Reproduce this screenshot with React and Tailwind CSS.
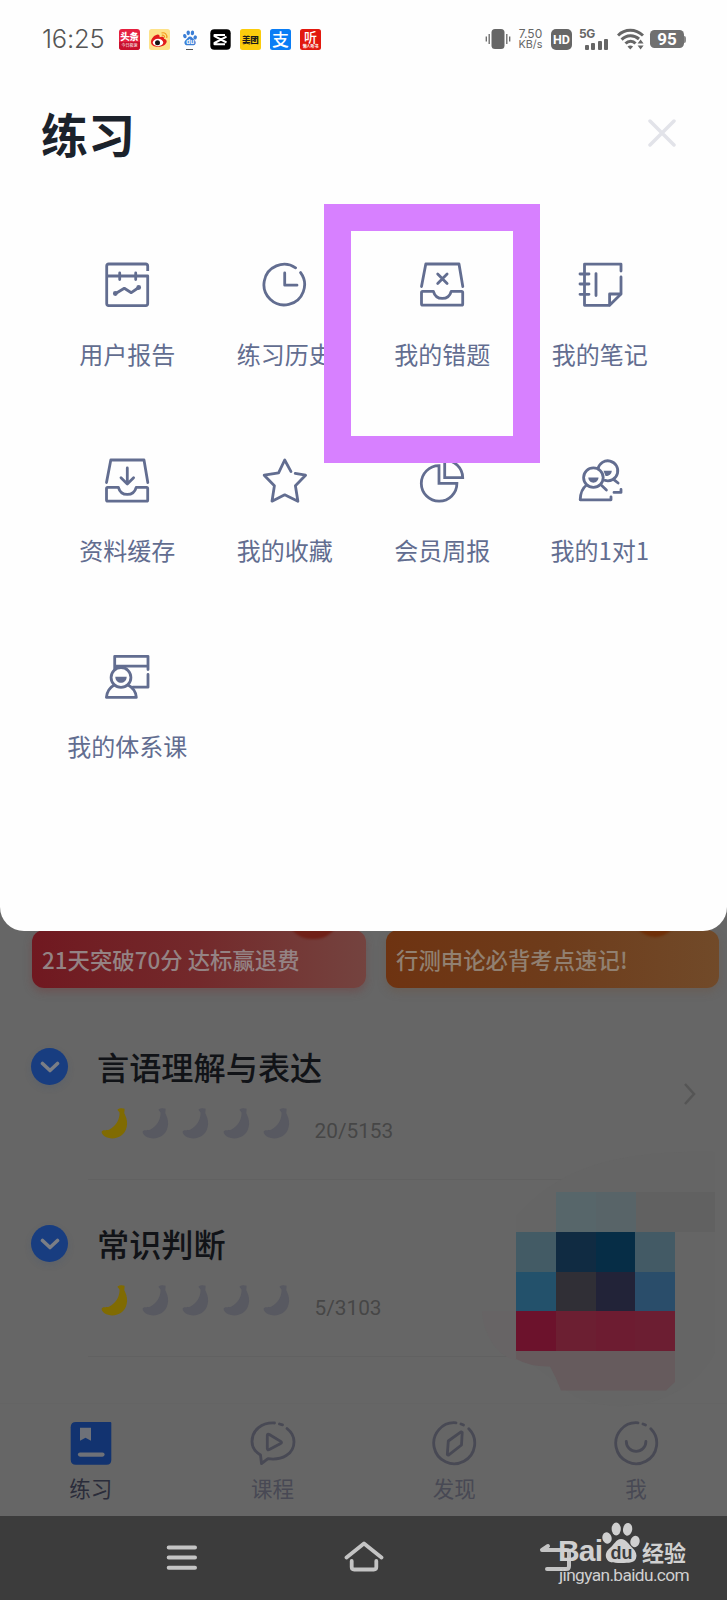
import React from 'react';

const stroke = {
    fill: 'none',
    stroke: 'currentColor',
    strokeWidth: 2.8,
    strokeLinecap: 'round',
    strokeLinejoin: 'round',
};

function Icon({ children }) {
    return (
        <svg viewBox="0 0 48 48" className="w-12 h-12" {...stroke}>
            {children}
        </svg>
    );
}

const Tray = () => (
    <>
        <path d="M3.5 25.5 7.8 3H41l3.8 22.5" />
        <path d="M4.6 30.3H15.4C16.6 34.8 19.8 37.4 24.3 37.4S32 34.8 33.2 30.3H43.6q1.1 0 1.1 1.1V43q0 1.2-1.1 1.2H4.7q-1.2 0-1.2-1.2V31.4q0-1.1 1.1-1.1Z" />
    </>
);

const ITEMS = [
    {
        label: '用户报告',
        icon: (
            <Icon>
                <path d="M44.7 10V5q0-2-2-2H5.7q-2 0-2 2v37.6q0 2 2 2h37q2 0 2-2V15H4" strokeLinecap="butt" />
                <path d="M16.7 12v6.6M32.7 12v6.6M12.3 32.7l9-5.4 7 4.4 7.4-5.2" />
                <circle cx="12.3" cy="32.5" r="1.5" fill="currentColor" strokeWidth="1.8" />
                <circle cx="35.7" cy="26.5" r="1.5" fill="currentColor" strokeWidth="1.8" />
            </Icon>
        ),
    },
    {
        label: '练习历史',
        icon: (
            <Icon>
                <path d="M34.6 6.8A20.3 20.3 0 1 0 39.6 11.6" />
                <path d="M23.7 12v12.2H36" />
            </Icon>
        ),
    },
    {
        label: '我的错题',
        icon: (
            <Icon>
                <Tray />
                <path d="m19.7 13 9.4 9.4M29.1 13l-9.4 9.4" />
            </Icon>
        ),
    },
    {
        label: '我的笔记',
        icon: (
            <Icon>
                <path d="M45 10V3.2H8.500V44.3H33.600L45 33V16" />
                <path d="M33.6 44V33H44.800M20 12.6v22" />
                <path d="M4 13h9M4 23h9M4 33.3h9" />
            </Icon>
        ),
    },
    {
        label: '资料缓存',
        icon: (
            <Icon>
                <Tray />
                <path d="M24.3 11v15.6M18 20.8l6.3 6.2 6.3-6.2" />
            </Icon>
        ),
    },
    {
        label: '我的收藏',
        icon: (
            <Icon>
                <path d="M30 14.6 23.7 3 17.6 15.8 3.2 18.2 13.4 28.7 11 44.2 23.7 37.8 36.9 44.2 34.4 28.7 44.6 18.2 34.2 16.4" />
            </Icon>
        ),
    },
    {
        label: '会员周报',
        icon: (
            <Icon>
                <path d="M21 8.6V26.3H38.9A17.8 17.8 0 1 1 21 8.6Z" strokeLinejoin="miter" />
                <path d="M26.7 3.2V20.6H44.7A18 17.6 0 0 0 26.7 3.2Z" strokeLinejoin="miter" />
            </Icon>
        ),
    },
    {
        label: '我的1对1',
        icon: (
            <Icon>
                <path d="M22 11.8A10 10 0 1 1 29 23.4M37.5 22.3l4.6 3.7M38 35.4h7v-3" />
                <circle cx="17.4" cy="20.6" r="9.8" />
                <path d="M10.6 28C6.6 31 4.4 35.7 4.2 42.8H35v-3M25.7 28.6 30.4 33" />
                <path d="M12.3 20.6h10.200c-.3 6.800-9.900 6.800-10.200 0ZM27.500 13.800h8.300c-.3 4-3.400 5.400-6.200 5.200Z" fill="currentColor" stroke="none" />
            </Icon>
        ),
    },
    {
        label: '我的体系课',
        icon: (
            <Icon>
                <path d="M11.7 16V3.3H45V16.6M12 13.2H45M45 21.4V34.2H30" />
                <circle cx="18" cy="24.4" r="9.9" />
                <path d="M11.3 32C6.4 34.6 4 39 3.4 44.4H33.3C33 39.2 30.4 34.8 25 32" />
                <path d="M12.3 23.800h11.4c-.2 8-11.2 8-11.4 0Z" fill="currentColor" stroke="none" />
            </Icon>
        ),
    },
];

function Paw({ className, toes, pad }) {
    return (
        <svg viewBox="0 0 38 42" className={className}>
            <g fill={toes}>
                <ellipse cx="5" cy="16" rx="4.600" ry="5.800" transform="rotate(-15 5 16)" />
                <ellipse cx="14.2" cy="7" rx="4.600" ry="6.400" />
                <ellipse cx="25.6" cy="7.3" rx="4.600" ry="6.400" transform="rotate(8 25.6 7.3)" />
                <ellipse cx="33" cy="19.5" rx="4.600" ry="5.800" transform="rotate(15 33 19.5)" />
                <path d="M19 17c-5 0-7 6-11 9-4 3.300-5 7-3.500 10.500 1.600 4 6 4.500 14.500 4.500s13.500-.5 15-4.500c1.300-3.500 0-7.200-3.500-10.500-4-3.500-6-9-11.500-9Z" />
            </g>
            <text x="19.5" y="37" textAnchor="middle" fontFamily="Liberation Sans" fontWeight="700" fontSize="18" fill={pad}>
                du
            </text>
        </svg>
    );
}

function StatusBar() {
    return (
        <div className="h-[78px] pl-[42px] pr-[41px] flex items-center justify-between text-[#666]">
            <div className="flex items-center">
                <span className="w-[77px] text-[25.5px] leading-none tracking-[-0.2px] font-[Inter,sans-serif] font-light text-[#555]">16:25</span>
                <div className="flex items-center gap-[9.2px]">
                    <div className="w-[21px] h-[21px] shrink-0 rounded-[3px] bg-[#e5203f] text-white flex flex-col items-center overflow-hidden">
                        <span className="text-[9.5px] leading-[12px] mt-[1px] font-black tracking-[-0.3px]">头条</span>
                        <span className="w-full h-[8px] bg-[#c9102c] text-[4px] leading-[7px] text-center whitespace-nowrap">今日极速</span>
                    </div>
                    <svg viewBox="0 0 21 21" className="w-[21px] h-[21px]">
                        <rect width="21" height="21" rx="2.5" fill="#fde28a" />
                        <path d="M2 13c0-4 5-8 7.500-7.300 1.500.4 1.200 2 1 2.500 2-.8 5-.8 4.500 1.600 4 1.200 3 4.200.5 6.200C12 18.500 2 19 2 13Z" fill="#e21c1c" />
                        <ellipse cx="9" cy="13.500" rx="5.200" ry="3.700" fill="#fff" />
                        <circle cx="8.500" cy="13.700" r="2.500" fill="#111" />
                        <path d="M12.500 4c3.500-1 6 1.500 5.200 5M12.800 6.300c1.800-.4 3 .6 2.700 2.300" fill="none" stroke="#f39a1e" strokeWidth="1.200" />
                    </svg>
                    <div className="w-[21px] h-[21px] flex flex-col items-center justify-between">
                        <Paw className="w-[14px] h-[16px] mt-[1px]" toes="#3c7fd6" pad="#fff" />
                        <span className="w-[7px] h-px bg-[#555]" />
                    </div>
                    <svg viewBox="0 0 21 21" className="w-[21px] h-[21px]">
                        <rect x=".3" y=".3" width="20.400" height="20.400" rx="4" fill="#000" />
                        <path d="M15 6H4.500V7.200L16.500 13.500M15 15.300H4.500V14L16.500 7.700" fill="none" stroke="#fff" strokeWidth="2" strokeLinejoin="round" />
                    </svg>
                    <div className="w-[21px] h-[21px] rounded-[2.5px] bg-[#fbcc0c] text-[#1a1a1a] text-[8.5px] leading-[20px] text-center font-black tracking-[-0.3px]">美团</div>
                    <div className="w-[21px] h-[21px] rounded-[2.5px] bg-[#0a7df5] text-white text-[17px] leading-[20px] text-center font-medium">支</div>
                    <div className="w-[21px] h-[21px] rounded-[2.5px] bg-[#e2190f] text-white flex flex-col items-center">
                        <span className="text-[13px] leading-[15px] font-medium">听</span>
                        <span className="text-[4px] leading-[5px] font-bold whitespace-nowrap">懒人听书</span>
                    </div>
                </div>
            </div>

            <div className="flex items-center">
                <svg viewBox="0 0 26 22" className="w-[26px] h-[22px]" fill="#666">
                    <rect x="6.500" y="1" width="13" height="20" rx="3.500" />
                    <path d="M4.200 6v10M1.300 8.500v5M21.800 6v10M24.700 8.500v5" stroke="#666" strokeWidth="1.300" />
                </svg>
                <div className="w-[25px] ml-[7px] mr-[8px] text-[12px] leading-[11.500px] flex flex-col items-center font-[Inter,sans-serif]">
                    <span>7.50</span>
                    <span className="text-[10.8px]">KB/s</span>
                </div>
                <div className="w-[21px] h-[21px] rounded-[5px] bg-[#666] text-white text-[12.5px] leading-[21px] font-bold text-center font-[Roboto,sans-serif]">HD</div>
                <div className="w-[31px] h-[21px] ml-[7px] flex flex-col justify-between">
                    <span className="h-[9px] text-[12px] leading-[10px] font-bold font-[Inter,sans-serif] tracking-[-0.3px]">5G</span>
                    <div className="h-[11px] flex items-end gap-[2.300px] pl-[6px]">
                        <span className="w-[4px] h-[5px] bg-[#666] rounded-[1px]" />
                        <span className="w-[4px] h-[7px] bg-[#666] rounded-[1px]" />
                        <span className="w-[4px] h-[9px] bg-[#666] rounded-[1px]" />
                        <span className="w-[4px] h-[11px] bg-[#666] rounded-[1px]" />
                    </div>
                </div>
                <svg viewBox="0 0 28 22" className="w-[28px] h-[22px] ml-[7px]" fill="none" stroke="#666" strokeWidth="3">
                    <path d="M1 7.500C8 .6 18.500.6 26 7.500M4.600 11.600C9.500 6.600 17 6.600 22 11M8.500 15.500c3-3 7.500-3 10 0" />
                    <path d="M13.300 21.500 10.500 18.500q2.800-2 5.600 0ZM23.600 11.500l3 4h-6ZM23.600 21.500l3-4h-6Z" fill="#666" stroke="none" />
                </svg>
                <div className="flex items-center ml-[5px]">
                    <div className="w-[34px] h-[18px] rounded-[4.500px] bg-[#707070] text-white text-[17px] leading-[19px] font-bold text-center font-[Roboto,sans-serif]">95</div>
                    <span className="w-[2px] h-[7px] bg-[#8a8a8a] rounded-r-[2px]" />
                </div>
            </div>
        </div>
    );
}

function Banana({ on }) {
    return (
        <svg viewBox="0 0 27 31" className="w-[27px] h-[31px]">
            <path
                d="M16.500 1.500c2-1.500 5-1.800 7-.7.400 1.800-.4 3-.2 4.500C28 14 26.500 22 21 27 15 31.800 5 31.500 1.300 26c-.9-1.400-.9-2.800.2-3.300 2.500-1 5.500.3 9-2.400C15.500 16.500 18.500 11.500 18.600 5c-.1-1.500-2-1.800-2.100-3.500Z"
                fill={on ? '#806b02' : '#585961'}
            />
        </svg>
    );
}

function SubjectRow({ title, count }) {
    return (
        <div className="h-[177px] flex">
            <div className="w-[37px] h-[37px] mt-[45px] ml-[31px] shrink-0 rounded-full bg-[#183d80] shadow-[0_3px_7px_rgba(40,75,130,0.15)] flex items-center justify-center">
                <svg viewBox="0 0 20 12" className="w-[20px] h-[12px] mt-[1px]" fill="none" stroke="#7b7e85" strokeWidth="3.600" strokeLinecap="round" strokeLinejoin="round">
                    <path d="m2.500 2.500 7.500 7 7.500-7" />
                </svg>
            </div>
            <div className="ml-[20px] pl-[9px] w-[484px] border-b border-[#616161]">
                <div className="mt-[40px] h-[46px] text-[32.2px] leading-[46px] font-medium text-[#111317]">{title}</div>
                <div className="mt-[19px] pl-[4px] flex items-start gap-[13.500px]">
                    {[0, 1, 2, 3, 4].map((i) => (
                        <Banana key={i} on={i === 0} />
                    ))}
                    <span className="ml-[11px] mt-[11px] text-[20.8px] leading-[24px] text-[#464646] font-[Roboto,sans-serif]">{count}</span>
                </div>
            </div>
        </div>
    );
}

// Pixelated ad bubble floating over the list
const CELLS = [
    [40, 0, '#57666a'], [80, 0, '#586468'], [120, 0, '#616161'], [159, 0, '#616161'],
    [0, 40, '#435b65'], [40, 40, '#102b42'], [80, 40, '#062d46'], [119, 40, '#435a65'],
    [0, 79.500, '#23516b'], [40, 79.500, '#302f36'], [80, 79.500, '#222338'], [119, 79.500, '#2a4d6a'],
    [0, 119, '#6c122c'], [40, 119, '#6c1f32'], [80, 119, '#6d1c31'], [119, 119, '#6c1e32'],
];

function AdBubble() {
    return (
        <svg viewBox="-34 -42 234 272" className="absolute left-[482px] top-[1150px] w-[234px] h-[272px]">
            <path d="M0 25C40-20 90-42 199-40V160C180 200 120 230 60 205L0 160Z" fill="#656565" />
            <path d="M-34 119H0V168C-20 165-33 140-34 119Z" fill="#676465" />
            <path d="M0 158.500H159V190L150 198.500H45Q40 185 34 174.500 15 175 0 167Z" fill="#665b5d" />
            {CELLS.map(([x, y, color]) => (
                <rect key={`${x}-${y}`} x={x} y={y} width="40" height="40" fill={color} shapeRendering="crispEdges" />
            ))}
        </svg>
    );
}

const TABS = [
    {
        label: '练习',
        icon: (
            <svg viewBox="0 0 48 48" className="w-12 h-12">
                <path d="M9 3H43.300q1 0 1 1V41q0 4.700-4.700 4.700H9Q3.700 45.700 3.700 40.400V8.300Q3.700 3 9 3Z" fill="#123370" />
                <path d="M13 8.700H24V21.700L18.500 18.700 13 21.700Z" fill="#6e7178" />
                <path d="M13 35.600H35.500" stroke="#6e7178" strokeWidth="4.200" strokeLinecap="round" />
            </svg>
        ),
    },
    {
        label: '课程',
        icon: (
            <Icon>
                <path d="M25.500 4C13 3.500 3 10.500 3 22.500c0 5.500 3.500 10.500 8.500 13.500l1 8.500 6.500-4.800c14 2 26-4.700 26-17 0-5-2.600-9.700-7-13.200M30.500 5l3 .9" />
                <path d="M18.300 16.700v12.600q0 2.200 2 1.200L31.700 24.400q1.600-1 0-2L20.300 15.500q-2-1-2 1.200Z" />
            </Icon>
        ),
    },
    {
        label: '发现',
        icon: (
            <Icon>
                <path d="M26 3.800A20.500 20.500 0 1 0 38.800 9.800M31 5l2.500 1" />
                <path d="M31 12.800 32.200 13.500 31.500 26 18.500 36.200 17.300 35.500 18.300 22Z" />
            </Icon>
        ),
    },
    {
        label: '我',
        icon: (
            <Icon>
                <path d="M26 3.800A20.500 20.500 0 1 0 38.800 9.800M31 5l2.500 1M14.300 22.500a9.800 9.800 0 0 0 19.600 0" />
            </Icon>
        ),
    },
];

function App() {
    return (
        <div className="relative w-[727px] h-[1600px] overflow-hidden bg-[#666] font-['Noto_Sans_CJK_SC',sans-serif]">
            {/* Practice sheet */}
            <div className="relative z-10 h-[931px] bg-[#fefefe] rounded-b-[24px]">
                <StatusBar />
                <div className="h-[112px] pl-[41px] pr-[51px] flex items-center justify-between">
                    <h1 className="text-[47px] leading-none mb-[3px] font-bold text-[#1b222b]">练习</h1>
                    <svg viewBox="0 0 28 28" className="w-7 h-7 mb-[3px]" stroke="#e2e3e9" strokeWidth="3.500" strokeLinecap="round">
                        <path d="m2 2 24 24M26 2 2 26" />
                    </svg>
                </div>
                <div className="px-[48.500px] pt-[71px] grid grid-cols-4 auto-rows-[196px]">
                    {ITEMS.map((item) => (
                        <div key={item.label} className="flex flex-col items-center text-[#626d90]">
                            {item.icon}
                            <span className="mt-[27px] text-[24px] leading-[35px] whitespace-nowrap">{item.label}</span>
                        </div>
                    ))}
                </div>
                <div className="absolute left-[324px] top-[204px] w-[216px] h-[259px] border-[#d780ff] border-[27px]" />
            </div>

            {/* Dimmed page under the sheet */}
            <div className="flex gap-[20px] pl-[32px] -mt-[1px]">
                <div className="relative w-[334px] h-[58px] shrink-0 rounded-[12px] overflow-hidden bg-linear-to-r from-[#701820] via-[#73292b] to-[#74433f] shadow-[0_4px_8px_rgba(115,55,55,0.4)] pl-[10px] text-[22.400px] leading-[58px] font-medium text-[#948384]">
                    <div className="absolute left-[255px] -top-[39px] w-[52px] h-[48px] rounded-full bg-[#702018] blur-[1px]" />
                    21天突破70分 达标赢退费
                </div>
                <div className="relative w-[333px] h-[58px] shrink-0 rounded-[12px] overflow-hidden bg-linear-to-r from-[#6e3311] via-[#6e3c1b] to-[#714a29] shadow-[0_4px_8px_rgba(110,80,60,0.35)] pl-[10px] text-[22.400px] leading-[58px] font-medium text-[#918071]">
                    <div className="absolute left-[247px] -top-[41px] w-[44px] h-[48px] rounded-full bg-[#6f2f08] blur-[1px]" />
                    行测申论必背考点速记!
                </div>
            </div>

            <div className="mt-[15px] h-[400px] flex">
                <div>
                    <SubjectRow title="言语理解与表达" count="20/5153" />
                    <SubjectRow title="常识判断" count="5/3103" />
                </div>
                <svg viewBox="0 0 14 24" className="w-[14px] h-[24px] mt-[79px] ml-[111px]" fill="none" stroke="#555" strokeWidth="2.500">
                    <path d="m2 2 9 10-9 10" />
                </svg>
            </div>
            <AdBubble />

            <div className="h-[113px] pt-[15px] border-t border-[#646464] grid grid-cols-4">
                {TABS.map((tab, i) => (
                    <div key={tab.label} className={`flex flex-col items-center ${i === 0 ? 'text-[#2a2c3a]' : 'text-[#484954]'}`}>
                        {tab.icon}
                        <span className="mt-[5px] text-[21.500px] leading-[32px]">{tab.label}</span>
                    </div>
                ))}
            </div>

            {/* System navigation */}
            <div className="relative h-[84px] bg-[#3c3c3c] flex items-center pl-[91px] text-[#c4c4c4]">
                <div className="w-[182px] flex justify-center">
                    <svg viewBox="0 0 32 28" className="w-[32px] h-[28px]" stroke="currentColor" strokeWidth="4" strokeLinecap="round">
                        <path d="M2.700 3.500H29M2.700 13.600H29M2.700 23.800H29" />
                    </svg>
                </div>
                <div className="w-[182px] pr-[1px] pb-[5px] flex justify-center">
                    <svg viewBox="0 0 40 32" className="w-[40px] h-[32px]" fill="none" stroke="currentColor" strokeWidth="3.800" strokeLinecap="round" strokeLinejoin="round">
                        <path d="M2.500 17.500 20 3.500 37.500 17.500M7.700 21v6q0 2.500 2.500 2.500H29.800q2.500 0 2.500-2.500V21" />
                    </svg>
                </div>
                <div className="w-[182px] pl-[18px] pb-[3px] flex justify-center">
                    <svg viewBox="0 0 34 30" className="w-[34px] h-[30px]" fill="none" stroke="currentColor" strokeWidth="4" strokeLinecap="round" strokeLinejoin="round">
                        <path d="M4 8H28.500q2.500 0 2.500 2.500V24q0 3-2.500 3H9M4 8l6-4" />
                    </svg>
                </div>
                <div className="absolute left-[558px] top-[6px] w-[134px] text-[#d0d0d0]">
                    <div className="flex items-end h-[42px]">
                        <span className="w-[44px] text-[30px] leading-[26px] font-bold tracking-[-0.800px] font-['Liberation_Sans',sans-serif]">Bai</span>
                        <Paw className="w-[38px] h-[42px]" toes="#d0d0d0" pad="#3c3c3c" />
                        <span className="ml-[2px] text-[22px] leading-[26px] font-bold whitespace-nowrap">经验</span>
                    </div>
                    <div className="pl-[1px] text-[17.300px] leading-[22px] font-[Roboto,sans-serif] tracking-[-0.600px]">jingyan.baidu.com</div>
                </div>
            </div>
        </div>
    );
}

export default App;
